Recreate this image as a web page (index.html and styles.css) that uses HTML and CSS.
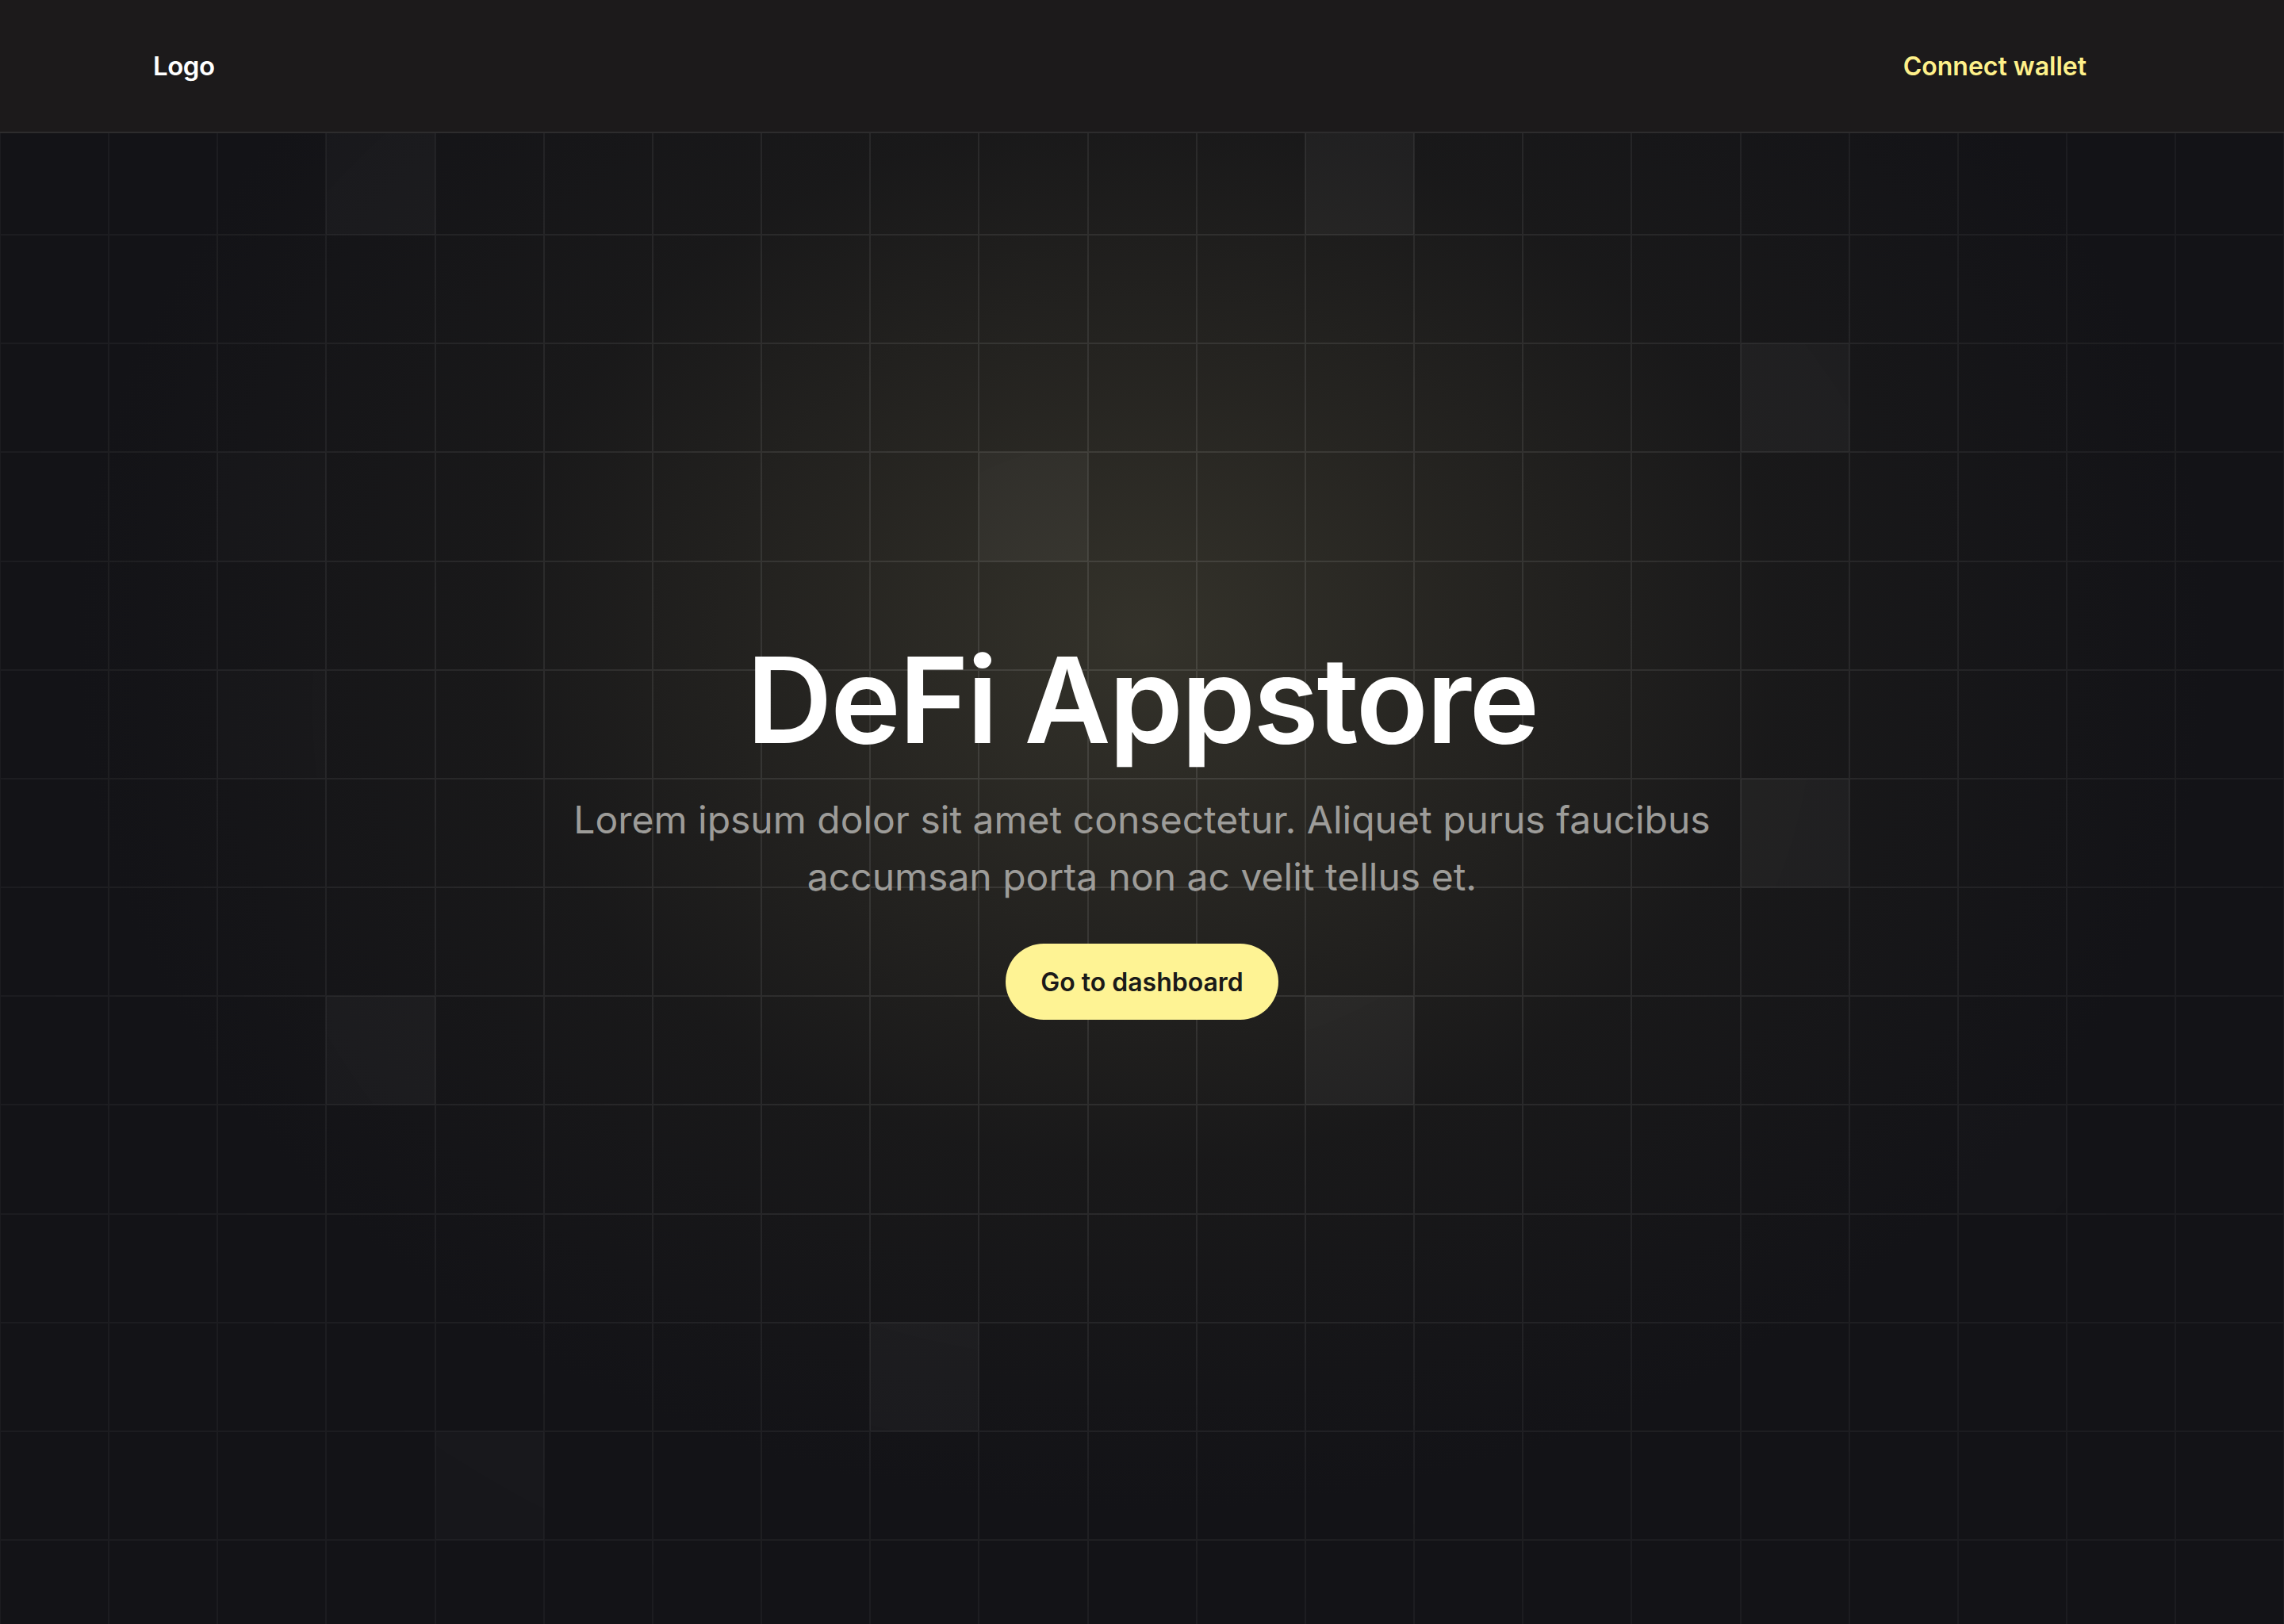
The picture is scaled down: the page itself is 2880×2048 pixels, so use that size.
FILE: index.html
```html
<!DOCTYPE html>
<html lang="en">
<head>
<meta charset="utf-8">
<title>DeFi Appstore</title>
<link rel="stylesheet" href="styles.css">
</head>
<body>
<header class="topbar">
  <a class="logo" href="#">Logo</a>
  <button class="connect" type="button">Connect wallet</button>
</header>
<main class="hero">
  <div class="grid" aria-hidden="true">
    <i></i><i></i><i></i><i class="lit"></i><i></i><i></i><i></i><i></i><i></i><i></i><i></i><i></i><i class="lit"></i><i></i><i></i><i></i><i></i><i></i><i></i><i></i><i></i>
    <i></i><i></i><i></i><i></i><i></i><i></i><i></i><i></i><i></i><i></i><i></i><i></i><i></i><i></i><i></i><i></i><i></i><i></i><i></i><i></i><i></i>
    <i></i><i></i><i></i><i></i><i></i><i></i><i></i><i></i><i></i><i></i><i></i><i></i><i></i><i></i><i></i><i></i><i class="lit"></i><i></i><i></i><i></i><i></i>
    <i></i><i></i><i class="dim"></i><i></i><i></i><i></i><i></i><i></i><i></i><i class="lit soft"></i><i></i><i></i><i></i><i></i><i></i><i></i><i></i><i></i><i></i><i></i><i></i>
    <i></i><i></i><i></i><i></i><i></i><i></i><i></i><i></i><i></i><i></i><i></i><i></i><i></i><i></i><i></i><i></i><i></i><i></i><i></i><i></i><i></i>
    <i></i><i></i><i class="dim"></i><i></i><i></i><i></i><i></i><i></i><i></i><i></i><i></i><i></i><i></i><i></i><i></i><i></i><i></i><i></i><i></i><i></i><i></i>
    <i></i><i></i><i></i><i></i><i></i><i></i><i></i><i></i><i></i><i></i><i></i><i></i><i></i><i></i><i></i><i></i><i class="lit"></i><i></i><i></i><i></i><i></i>
    <i></i><i></i><i></i><i></i><i></i><i></i><i></i><i></i><i></i><i></i><i></i><i></i><i></i><i></i><i></i><i></i><i></i><i></i><i></i><i></i><i></i>
    <i></i><i></i><i></i><i class="lit"></i><i></i><i></i><i></i><i></i><i></i><i></i><i></i><i></i><i class="lit"></i><i></i><i></i><i></i><i></i><i></i><i></i><i></i><i></i>
    <i></i><i></i><i></i><i></i><i></i><i></i><i></i><i></i><i></i><i></i><i></i><i></i><i></i><i></i><i></i><i></i><i></i><i></i><i class="dim"></i><i></i><i></i>
    <i></i><i></i><i></i><i></i><i></i><i></i><i></i><i></i><i></i><i></i><i></i><i></i><i></i><i></i><i></i><i></i><i></i><i></i><i></i><i></i><i></i>
    <i></i><i></i><i></i><i></i><i></i><i></i><i></i><i></i><i class="lit"></i><i></i><i></i><i></i><i></i><i></i><i></i><i></i><i></i><i></i><i></i><i></i><i></i>
    <i></i><i></i><i></i><i></i><i class="lit"></i><i></i><i></i><i></i><i></i><i></i><i></i><i></i><i></i><i></i><i></i><i></i><i></i><i></i><i></i><i></i><i></i>
    <i></i><i></i><i></i><i></i><i></i><i></i><i></i><i></i><i></i><i></i><i></i><i></i><i></i><i></i><i></i><i></i><i></i><i></i><i></i><i></i><i></i>
  </div>
  <div class="hero-content">
    <h1 class="title">DeFi Appstore</h1>
    <p class="lead">Lorem ipsum dolor sit amet consectetur. Aliquet purus faucibus accumsan porta non ac velit tellus et.</p>
    <a class="cta" href="#">Go to dashboard</a>
  </div>
</main>
</body>
</html>
```

FILE: styles.css
```css
* {
  box-sizing: border-box;
  margin: 0;
  padding: 0;
}

html,
body {
  height: 100%;
}

body {
  background: #131317;
  color: #ffffff;
  font-family: Inter, "Noto Sans", "Liberation Sans", sans-serif;
  overflow: hidden;
}

.topbar {
  position: relative;
  z-index: 2;
  height: 168px;
  display: flex;
  align-items: center;
  justify-content: space-between;
  padding: 0 193px;
  background: #1c1a1b;
  border-bottom: 2px solid #2d2c2d;
}

.logo {
  color: #ffffff;
  text-decoration: none;
  font-size: 33px;
  font-weight: 600;
  letter-spacing: -0.5px;
}

.connect {
  background: none;
  border: 0;
  font-family: inherit;
  font-size: 32px;
  font-weight: 600;
  color: #fef08a;
  padding: 0 56px;
  cursor: pointer;
}

.hero {
  position: relative;
  height: calc(100vh - 168px);
  overflow: hidden;
  background:
    radial-gradient(ellipse 1350px 1100px at 50% 34%, rgba(58, 56, 46, 0.85) 0%, rgba(47, 45, 38, 0.68) 30%, rgba(35, 34, 30, 0.38) 60%, rgba(19, 19, 23, 0) 100%),
    #131317;
}

.grid {
  position: absolute;
  left: 0;
  right: 0;
  top: -9px;
  display: grid;
  grid-template-columns: repeat(21, 1fr);
  -webkit-mask-image: radial-gradient(ellipse 1500px 1250px at 50% 38%, #000 0%, rgba(0, 0, 0, 0.8) 40%, rgba(0, 0, 0, 0.36) 100%);
  mask-image: radial-gradient(ellipse 1500px 1250px at 50% 38%, #000 0%, rgba(0, 0, 0, 0.8) 40%, rgba(0, 0, 0, 0.36) 100%);
}

.grid i {
  display: block;
  aspect-ratio: 1 / 1;
  border: 1px solid rgba(255, 255, 255, 0.105);
}

.grid i.lit {
  background: rgba(255, 255, 255, 0.055);
}

.grid i.soft {
  background: rgba(255, 255, 255, 0.042);
}

.grid i.dim {
  background: rgba(255, 255, 255, 0.022);
}

.hero-content {
  position: relative;
  z-index: 1;
  display: flex;
  flex-direction: column;
  align-items: center;
  text-align: center;
  padding-top: 625px;
}

.title {
  font-size: 150px;
  line-height: 180px;
  font-weight: 600;
  letter-spacing: -2.4px;
  color: #ffffff;
}

.lead {
  margin-top: 25px;
  max-width: 1480px;
  font-size: 48px;
  line-height: 72px;
  font-weight: 400;
  color: #9d9c99;
}

.cta {
  margin-top: 48px;
  height: 96px;
  display: inline-flex;
  align-items: center;
  padding: 0 44px;
  border-radius: 48px;
  background: #fef394;
  color: #1b1a19;
  font-size: 32px;
  font-weight: 600;
  text-decoration: none;
}
```
